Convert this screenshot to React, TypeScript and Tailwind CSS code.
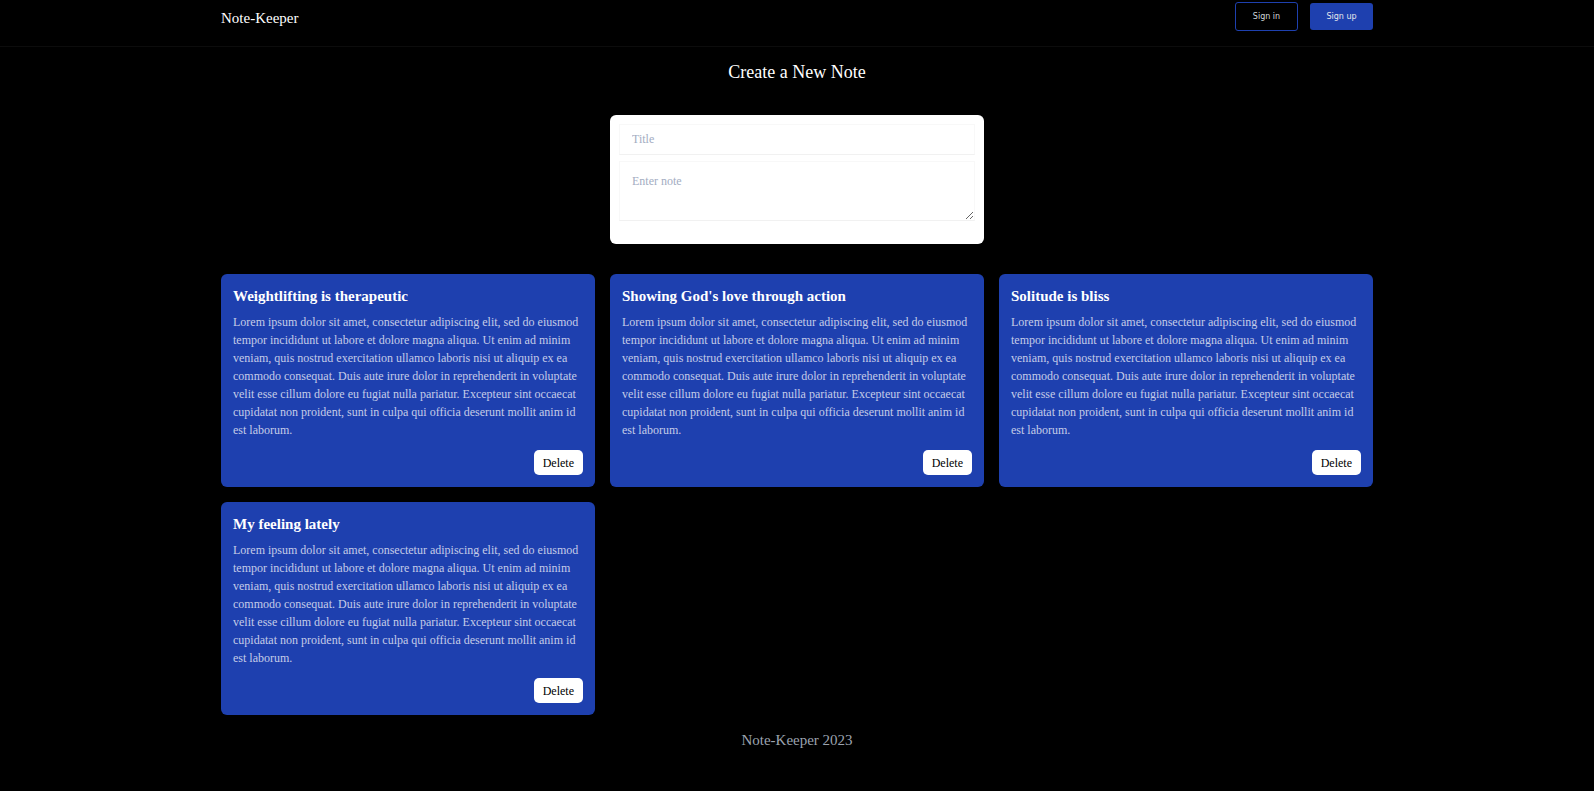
const lorem =
  "Lorem ipsum dolor sit amet, consectetur adipiscing elit, sed do eiusmod tempor incididunt ut labore et dolore magna aliqua. Ut enim ad minim veniam, quis nostrud exercitation ullamco laboris nisi ut aliquip ex ea commodo consequat. Duis aute irure dolor in reprehenderit in voluptate velit esse cillum dolore eu fugiat nulla pariatur. Excepteur sint occaecat cupidatat non proident, sunt in culpa qui officia deserunt mollit anim id est laborum.";

const notes = [
  { id: 1, title: "Weightlifting is therapeutic", body: lorem },
  { id: 2, title: "Showing God's love through action", body: lorem },
  { id: 3, title: "Solitude is bliss", body: lorem },
  { id: 4, title: "My feeling lately", body: lorem },
];

const Header = () => (
  <header className="border-b border-[#0c0c0c]">
    <div className="mx-auto flex h-[46px] max-w-[1152px] items-start justify-between pt-[2px]">
      <div className="pt-[5px] text-[15px] leading-[22px] text-white">Note-Keeper</div>
      <div className="flex items-center gap-3">
        <button className="h-[29px] w-[63px] rounded-[3px] border border-[#1e40af] text-[8px] text-[#d1d5db] font-['DejaVu_Sans',sans-serif]">
          Sign in
        </button>
        <button className="h-[27px] w-[63px] rounded-[3px] bg-[#1e40af] text-[8px] text-[#e5e7eb] font-['DejaVu_Sans',sans-serif]">
          Sign up
        </button>
      </div>
    </div>
  </header>
);

const NoteForm = () => (
  <form className="mx-auto flex w-[374px] flex-col gap-[6px] rounded-[6px] bg-white px-[9px] pt-[9px] pb-[23px]">
    <input
      placeholder="Title"
      className="h-[31px] w-full border border-[#f8f8f8] border-b-[#f1f1f1] px-3 text-[12px] text-black outline-none placeholder:text-[#a3adc2]"
    />
    <textarea
      placeholder="Enter note"
      className="h-[60px] w-full border border-[#f8f8f8] border-b-[#f1f1f1] px-3 pt-[10px] text-[12px] leading-[18px] text-black outline-none placeholder:text-[#a3adc2]"
    />
  </form>
);

const NoteCard = ({ title, body }: { title: string; body: string }) => (
  <div className="flex flex-col rounded-[6px] bg-[#1e40af] p-3">
    <h2 className="mb-[7px] text-[15px] font-bold leading-[20px] text-white">{title}</h2>
    <p className="text-[12px] leading-[18px] text-[#c5cce8]">{body}</p>
    <div className="mt-[11px] flex justify-end">
      <button className="h-[25px] rounded-[5px] bg-white px-[9px] text-[12px] text-black">Delete</button>
    </div>
  </div>
);

export default function App() {
  return (
    <div className="min-h-screen bg-black font-['Liberation_Serif',serif]">
      <Header />
      <main className="mx-auto max-w-[1152px]">
        <h1 className="mt-[12px] text-center text-[18px] leading-[27px] text-white">Create a New Note</h1>
        <div className="mt-[29px]">
          <NoteForm />
        </div>
        <div className="mt-[30px] grid grid-cols-3 gap-[15px]">
          {notes.map((n) => (
            <NoteCard key={n.id} title={n.title} body={n.body} />
          ))}
        </div>
      </main>
      <footer className="mt-[14px] pb-8 text-center text-[15px] leading-[22px] text-[#9ca3af]">Note-Keeper 2023</footer>
    </div>
  );
}
